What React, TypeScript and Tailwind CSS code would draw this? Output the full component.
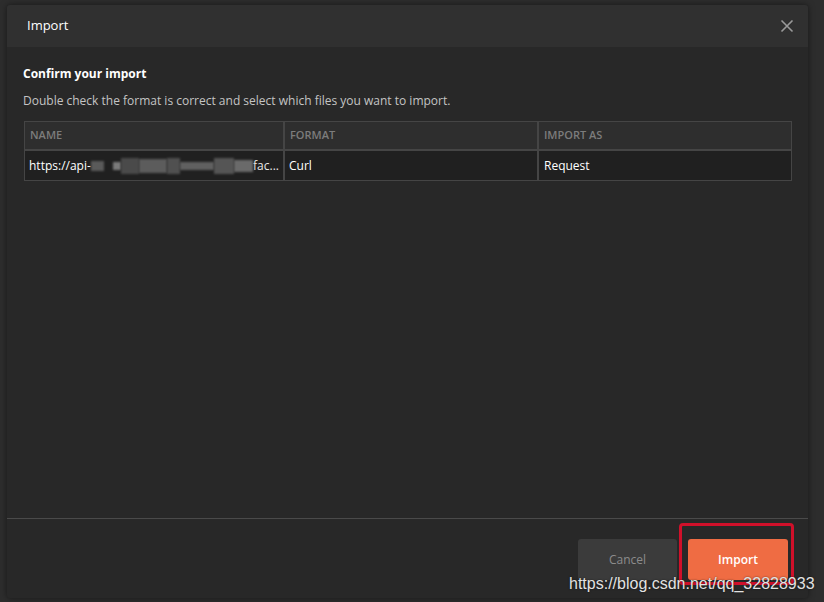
export default function App() {
  const font = { fontFamily: '"Open Sans", "Liberation Sans", sans-serif' }

  return (
    <div className="relative w-[824px] h-[602px] bg-[#2d2d2d] overflow-hidden pl-[7px] pt-[5px]" style={font}>
      <div className="flex flex-col w-[801px] h-[593px] bg-[#282828] rounded-[3px] shadow-[0_0_6px_rgba(0,0,0,0.5)] overflow-hidden">
        {/* header */}
        <div className="flex items-center justify-between h-[42px] bg-[#303030] pl-[20px] pr-[14px] shrink-0">
          <span className="text-[13px] text-white">Import</span>
          <svg width="14" height="14" viewBox="0 0 14 14" className="text-[#9a9a9a]">
            <path d="M1.5 1.5 L12.5 12.5 M12.5 1.5 L1.5 12.5" stroke="currentColor" strokeWidth="1.6" />
          </svg>
        </div>

        {/* body */}
        <div className="flex-1 px-[16px] pt-[19px]">
          <h3 className="text-[12px] font-bold text-white leading-[16px]">Confirm your import</h3>
          <p className="text-[12px] text-[#c4c4c4] leading-[16px] mt-[11px]">
            Double check the format is correct and select which files you want to import.
          </p>
          <div className="mt-[12px] ml-[1px] w-[768px] border border-[#454545] text-[12px]">
            <div className="grid grid-cols-[260px_254px_1fr] h-[29px] bg-[#2e2e2e] border-b-[2px] border-[#454545]">
              <div className="flex items-center px-[5px] border-r-[2px] border-[#454545] text-[11px] font-semibold text-[#7c7c7c]">NAME</div>
              <div className="flex items-center px-[5px] border-r-[2px] border-[#454545] text-[11px] font-semibold text-[#7c7c7c]">FORMAT</div>
              <div className="flex items-center px-[5px] text-[11px] font-semibold text-[#7c7c7c]">IMPORT AS</div>
            </div>
            <div className="grid grid-cols-[260px_254px_1fr] h-[29px] bg-[#202020]">
              <div className="flex items-center px-[4px] border-r-[2px] border-[#454545] text-white overflow-hidden whitespace-nowrap">
                <span>https://api-</span>
                <span className="inline-block w-[14px] h-[10px] bg-[#5a5a5a] blur-[1px]" />
                <span className="inline-block w-[10px]" />
                <span className="inline-block w-[8px] h-[8px] bg-[#7a7a7a] blur-[1px]" />
                <span className="inline-block w-[20px] h-[16px] bg-[#4a4a4a] blur-[1px]" />
                <span className="inline-block w-[30px] h-[14px] bg-[#5c5c5c] blur-[1px]" />
                <span className="inline-block w-[14px] h-[16px] bg-[#505050] blur-[1px]" />
                <span className="inline-block w-[36px] h-[8px] bg-[#606060] blur-[1px]" />
                <span className="inline-block w-[22px] h-[16px] bg-[#555] blur-[1px]" />
                <span className="inline-block w-[20px] h-[12px] bg-[#6a6a6a] blur-[1px]" />
                <span className="text-[#e8e8e8]">fac...</span>
              </div>
              <div className="flex items-center px-[4px] border-r-[2px] border-[#454545] text-white">Curl</div>
              <div className="flex items-center px-[5px] text-white">Request</div>
            </div>
          </div>
        </div>

        {/* footer */}
        <div className="flex items-start justify-end gap-[11px] h-[80px] border-t border-[#4a4a4a] pt-[20px] pr-[20px] shrink-0">
          <button className="w-[99px] h-[41px] rounded-[3px] bg-[#3b3b3b] text-[12px] text-[#8c8c8c]">Cancel</button>
          <div className="relative">
            <button className="w-[100px] h-[41px] rounded-[3px] bg-[#ef6c43] text-[12px] font-semibold text-white">Import</button>
            <div className="absolute -left-[9px] -top-[16px] -right-[6px] -bottom-[5px] border-[3px] border-[#d0102a] rounded-[4px] pointer-events-none" />
          </div>
        </div>
      </div>

      <div
        className="absolute left-[569px] top-[572px] text-[16px] text-[#e2e2e2] [text-shadow:0_0_2px_rgba(0,0,0,0.6)]"
        style={{ fontFamily: '"Liberation Sans", Arial, sans-serif' }}
      >
        https://blog.csdn.net/qq_32828933
      </div>
    </div>
  )
}
